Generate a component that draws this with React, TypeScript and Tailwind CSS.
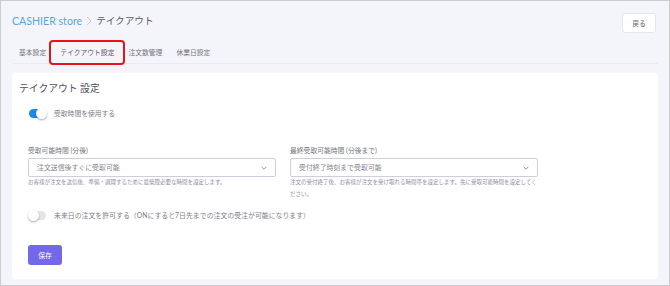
import React from "react";

const font = { fontFamily: 'Lato, "Noto Sans CJK JP", sans-serif' };

function Toggle({ on }: { on: boolean }) {
  return (
    <div
      className={`relative w-[17px] h-[9px] rounded-full ${on ? "bg-[#1e88e5]" : "bg-[#e4e5ea]"}`}
    >
      <div
        className={`absolute top-[-1px] ${on ? "left-[7px]" : "left-[-1px]"} w-[11px] h-[11px] rounded-full bg-white shadow-[0_1px_2px_rgba(0,0,0,0.35)]`}
      />
    </div>
  );
}

function Chevron() {
  return (
    <svg width="6" height="4" viewBox="0 0 6 4" className="shrink-0">
      <polyline points="0.6,0.8 3,3.2 5.4,0.8" fill="none" stroke="#777" strokeWidth="0.8" />
    </svg>
  );
}

function Field({ label, value, help }: { label: string; value: string; help: string }) {
  return (
    <div className="flex flex-col">
      <div className="text-[6.8px] leading-[10px] text-[#75757f]">{label}</div>
      <div className="mt-[3px] h-[19px] border border-[#cdcde0] rounded-[2px] bg-white flex items-center justify-between pl-[8px] pr-[8px]">
        <span className="text-[6.9px] text-[#86868f]">{value}</span>
        <Chevron />
      </div>
      <div className="mt-[-1px] text-[5.5px] leading-[12px] text-[#8f8f99]">{help}</div>
    </div>
  );
}

export default function App() {
  return (
    <div
      className="w-[670px] h-[286px] border border-[#cccccc] bg-[#f4f5fa] flex flex-col overflow-hidden"
      style={font}
    >
      <div className="flex justify-between items-start pl-[11px] pr-[13px] pt-[12px]">
        <div className="flex items-center leading-[16px]">
          <span className="text-[10.6px] text-[#55a6e8]">CASHIER store</span>
          <svg width="6" height="10" viewBox="0 0 6 10" className="mx-[4px]">
            <polyline points="1,1 5,5 1,9" fill="none" stroke="#c4c4cc" strokeWidth="0.9" />
          </svg>
          <span className="text-[9.6px] text-[#55555e]">テイクアウト</span>
        </div>
        <div className="w-[34px] h-[20px] border border-[#e4e6ee] rounded-[3px] bg-white flex items-center justify-center text-[6.8px] text-[#666]">
          戻る
        </div>
      </div>

      <div className="mx-[11px] mt-[9px] h-[22px] border-b border-[#e9ebf1] flex">
        <div className="px-[7px] flex items-center text-[6.8px] text-[#74747c]">基本設定</div>
        <div className="relative px-[7px] flex items-center text-[6.8px] text-[#5a5a62]">
          テイクアウト設定
          <span className="absolute left-[-4px] right-[-4px] top-[-2px] bottom-[-2px] border-2 border-[#e8141c] rounded-[4px]" />
        </div>
        <div className="px-[7px] flex items-center text-[6.8px] text-[#74747c]">注文数管理</div>
        <div className="px-[7px] flex items-center text-[6.8px] text-[#74747c]">休業日設定</div>
      </div>

      <div className="mx-[11px] mt-[9px] bg-white rounded-[3px] pl-[7px] pt-[8px] pb-[14px] flex flex-col">
        <div className="text-[9.8px] leading-[14px] text-[#50505a]">テイクアウト 設定</div>

        <div className="mt-[13px] ml-[10px] flex items-center gap-[8px] h-[10px]">
          <Toggle on />
          <span className="text-[6.8px] text-[#80808a]">受取時間を使用する</span>
        </div>

        <div className="mt-[27px] ml-[9px] grid grid-cols-[248px_248px] gap-x-[14px] items-start">
          <Field
            label="受取可能時間 (分後)"
            value="注文送信後すぐに受取可能"
            help="お客様が注文を送信後、準備・調理するために最低限必要な時間を設定します。"
          />
          <Field
            label="最終受取可能時間 (分後まで)"
            value="受付終了時刻まで受取可能"
            help="注文の受付終了後、お客様が注文を受け取れる時間帯を設定します。先に受取可能時間を設定してください。"
          />
        </div>

        <div className="mt-[10px] ml-[10px] flex items-center gap-[8px] h-[10px]">
          <Toggle on={false} />
          <span className="text-[6.9px] text-[#80808a]">
            未来日の注文を許可する（ONにすると7日先までの注文の受注が可能になります）
          </span>
        </div>

        <div className="mt-[25px] ml-[9px] w-[34px] h-[20px] rounded-[3px] bg-[#7468ea] flex items-center justify-center text-[6.8px] text-white">
          保存
        </div>
      </div>
    </div>
  );
}
